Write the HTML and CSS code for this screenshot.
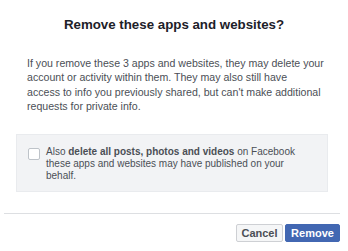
FILE: index.html
```html
<!DOCTYPE html>
<html>
<head>
<meta charset="utf-8">
<link rel="stylesheet" href="styles.css">
</head>
<body>
<div class="dialog">
  <h1 class="title">Remove these apps and websites?</h1>
  <p class="body-text">If you remove these 3 apps and websites, they may delete your account or activity within them. They may also still have<br>access to info you previously shared, but can't make additional requests for private info.</p>
  <div class="panel">
    <span class="checkbox"></span>
    <p class="panel-text">Also <b>delete all posts, photos and videos</b> on Facebook these apps and websites may have published on your behalf.</p>
  </div>
  <div class="footer">
    <button class="btn btn-cancel">Cancel</button>
    <button class="btn btn-remove">Remove</button>
  </div>
</div>
</body>
</html>
```
FILE: styles.css
```css
html, body {
  margin: 0;
  padding: 0;
  background: #fff;
}
body {
  width: 348px;
  height: 251px;
  overflow: hidden;
  font-family: "Liberation Sans", Arial, sans-serif;
}
.dialog {
  display: flex;
  flex-direction: column;
}
.title {
  margin: 0;
  padding-top: 17px;
  font-size: 13.3px;
  line-height: 16px;
  font-weight: bold;
  color: #1d2129;
  text-align: center;
}
.body-text {
  margin: 23px 22px 0 27px;
  font-size: 10.6px;
  line-height: 14.4px;
  color: #4b4f56;
}
.panel {
  margin: 20px 20px 0 16px;
  background: #f2f3f5;
  border: 1px solid #e9ebee;
  padding: 11px 20px 9px 11px;
  display: flex;
  align-items: flex-start;
  gap: 6px;
}
.checkbox {
  flex: none;
  width: 10px;
  height: 10px;
  margin-top: 2px;
  border: 1px solid #bec3c9;
  border-radius: 2px;
  background: #fff;
}
.panel-text {
  margin: 0;
  font-size: 10px;
  line-height: 12px;
  color: #4b4f56;
}
.panel-text b {
  font-weight: bold;
  color: #4b4f56;
}
.footer {
  margin: 21px 8px 0 4px;
  border-top: 1px solid #dddfe2;
  padding-top: 10px;
  display: flex;
  justify-content: flex-end;
  gap: 2px;
}
.btn {
  height: 18px;
  padding: 0 4px;
  font-family: "Liberation Sans", Arial, sans-serif;
  font-size: 11px;
  font-weight: bold;
  border-radius: 2px;
  line-height: 16px;
}
.btn-cancel {
  background: #f5f6f7;
  border: 1px solid #ced0d4;
  color: #4b4f56;
  width: 47px;
}
.btn-remove {
  background: #4267b2;
  border: 1px solid #4267b2;
  color: #fff;
  width: 55px;
}
```
